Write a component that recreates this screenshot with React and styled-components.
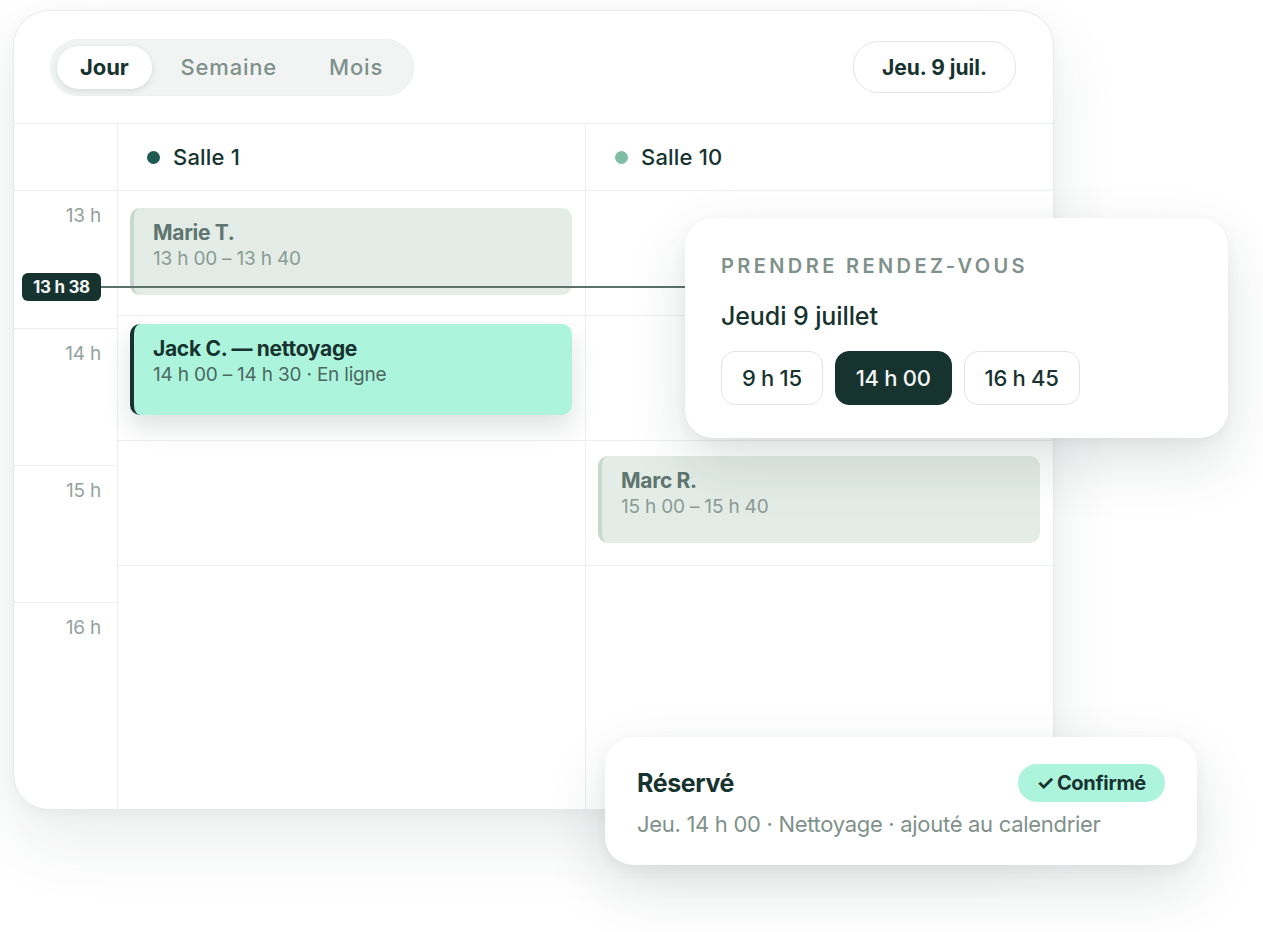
import { createGlobalStyle, styled } from "styled-components";

const GlobalStyle = createGlobalStyle`
    html, body {
        margin: 0;
        padding: 0;
        background: #ffffff;
    }

    body {
        font-family: Inter, "Noto Sans", sans-serif;
        color: #17332f;
        -webkit-font-smoothing: antialiased;
    }
`

const Page = styled.div`
    position: relative;
    width: 1263px;
    height: 932px;
    padding: 10px 0 0 13px;
    box-sizing: border-box;
    overflow: hidden;
`

const Calendar = styled.div`
    width: 1041px;
    height: 800px;
    box-sizing: border-box;
    border: 1px solid #e6ebe9;
    border-radius: 36px;
    background: #fff;
    overflow: hidden;
    display: flex;
    flex-direction: column;
    box-shadow: 0 30px 70px rgba(30, 60, 55, 0.09), 0 4px 16px rgba(30, 60, 55, 0.04);
`

const Toolbar = styled.div`
    height: 113px;
    flex-shrink: 0;
    display: flex;
    align-items: center;
    justify-content: space-between;
    padding: 0 37px 0 36px;
    box-sizing: border-box;
    border-bottom: 1px solid #eceff0;
`

const Segmented = styled.div`
    display: flex;
    align-items: center;
    gap: 6px;
    height: 57px;
    padding: 0 8px 0 7px;
    box-sizing: border-box;
    background: #f1f4f3;
    border-radius: 29px;
    box-shadow: inset 0 0 0 1px #eef1f0;
`

const Segment = styled.div`
    height: 43px;
    padding: 0 23px;
    display: flex;
    align-items: center;
    border-radius: 22px;
    font-size: 22px;
    letter-spacing: ${p => (p.$active ? "-0.1px" : "0.8px")};
    font-weight: ${p => (p.$active ? 700 : 500)};
    color: ${p => (p.$active ? "#17332f" : "#7f918b")};
    background: ${p => (p.$active ? "#fff" : "transparent")};
    box-shadow: ${p => (p.$active ? "0 2px 6px rgba(20, 50, 45, 0.12)" : "none")};
`

const DateButton = styled.div`
    height: 50px;
    padding: 0 28px;
    display: flex;
    align-items: center;
    border: 1px solid #e0e6e4;
    border-radius: 25px;
    font-size: 21px;
    font-weight: 700;
    letter-spacing: 0;
    color: #17332f;
`

const Grid = styled.div`
    flex: 1;
    display: grid;
    grid-template-columns: 104px 468px 1fr;
    grid-template-rows: 67px 1fr;
    position: relative;
`

const Corner = styled.div`
    border-bottom: 1px solid #eceff0;
    border-right: 1px solid #eceff0;
`

const RoomHead = styled.div`
    display: flex;
    align-items: center;
    gap: 13px;
    padding-left: 29px;
    border-bottom: 1px solid #eceff0;
    border-right: ${p => (p.$last ? "none" : "1px solid #eceff0")};
    font-size: 22px;
    font-weight: 500;
    letter-spacing: 0.2px;
    color: #17332f;
`

const Dot = styled.span`
    width: 13px;
    height: 13px;
    border-radius: 50%;
    background: ${p => p.$color};
`

const Hours = styled.div`
    display: flex;
    flex-direction: column;
    border-right: 1px solid #eceff0;
`

const HourRow = styled.div`
    height: 137px;
    flex-shrink: 0;
    box-sizing: border-box;
    border-top: ${p => (p.$first ? "none" : "1px solid #eceff0")};
    padding: 13px 16px 0 0;
    text-align: right;
    font-size: 19px;
    letter-spacing: -0.2px;
    color: #93a29d;
`

const Room = styled.div`
    display: flex;
    flex-direction: column;
    border-right: ${p => (p.$last ? "none" : "1px solid #eceff0")};
`

const Slot = styled.div`
    height: 125px;
    box-sizing: border-box;
    border-bottom: 1px solid #eceff0;
    padding: ${p => p.$offset}px 13px 0 12px;
`

const Event = styled.div`
    height: ${p => p.$height}px;
    box-sizing: border-box;
    border-radius: 10px;
    border-left: 4px solid ${p => (p.$active ? "#17332f" : "#c7d8ce")};
    background: ${p => (p.$active ? "#adf4dc" : "#e3ece6")};
    padding: 12px 19px;
    box-shadow: ${p => (p.$active ? "0 12px 26px rgba(20, 50, 45, 0.14)" : "none")};
    position: relative;
    z-index: ${p => (p.$active ? 2 : 0)};
`

const EventTitle = styled.div`
    font-size: 21px;
    font-weight: 700;
    letter-spacing: -0.3px;
    line-height: 26px;
    color: ${p => (p.$active ? "#17332f" : "#5f756f")};
`

const EventTime = styled.div`
    font-size: 19px;
    letter-spacing: -0.2px;
    line-height: 26px;
    color: ${p => (p.$active ? "#4c6862" : "#8b9b96")};
`

const NowLine = styled.div`
    position: absolute;
    left: 8px;
    right: 0;
    top: 162px;
    height: 2px;
    background: #5c716c;
    z-index: 3;
`

const NowBadge = styled.div`
    position: absolute;
    left: 0;
    top: -13px;
    height: 28px;
    padding: 0 11px;
    display: flex;
    align-items: center;
    border-radius: 6px;
    background: #17332f;
    color: #f2f5f4;
    font-size: 17px;
    font-weight: 700;
    letter-spacing: -0.3px;
`

const Booking = styled.div`
    position: absolute;
    left: 685px;
    top: 218px;
    width: 543px;
    height: 220px;
    box-sizing: border-box;
    padding: 36px 36px 0;
    background: #fff;
    border-radius: 28px;
    box-shadow: 0 24px 60px rgba(20, 50, 45, 0.13), 0 4px 14px rgba(20, 50, 45, 0.05);
    z-index: 5;
`

const Eyebrow = styled.div`
    font-size: 20px;
    font-weight: 600;
    letter-spacing: 3.4px;
    color: #7f918b;
    text-transform: uppercase;
    line-height: 24px;
`

const DayTitle = styled.div`
    margin-top: 24px;
    font-size: 25px;
    font-weight: 500;
    letter-spacing: -0.1px;
    line-height: 28px;
    color: #17332f;
`

const Slots = styled.div`
    display: flex;
    gap: 12px;
    margin-top: 21px;
`

const TimeChip = styled.div`
    height: 54px;
    padding: 0 20px;
    display: flex;
    align-items: center;
    box-sizing: border-box;
    border-radius: 14px;
    border: 1px solid ${p => (p.$selected ? "#17332f" : "#dfe5e3")};
    background: ${p => (p.$selected ? "#17332f" : "#fff")};
    color: ${p => (p.$selected ? "#f2f5f4" : "#17332f")};
    font-size: 22px;
    font-weight: 500;
    letter-spacing: -0.3px;
`

const Confirmation = styled.div`
    position: absolute;
    left: 605px;
    top: 737px;
    width: 592px;
    height: 128px;
    box-sizing: border-box;
    padding: 27px 32px 0;
    background: #fff;
    border-radius: 28px;
    box-shadow: 0 24px 60px rgba(20, 50, 45, 0.13), 0 4px 14px rgba(20, 50, 45, 0.05);
    z-index: 5;
`

const ConfirmRow = styled.div`
    display: flex;
    align-items: center;
    justify-content: space-between;
`

const ConfirmTitle = styled.div`
    font-size: 25px;
    font-weight: 700;
    letter-spacing: -0.4px;
    color: #17332f;
`

const Badge = styled.div`
    height: 38px;
    padding: 0 19px;
    display: flex;
    align-items: center;
    gap: 3px;
    border-radius: 19px;
    background: #adf4dc;
    font-size: 20px;
    font-weight: 700;
    letter-spacing: -0.3px;
    color: #17332f;
`

const ConfirmText = styled.div`
    margin-top: 9px;
    font-size: 22px;
    letter-spacing: -0.3px;
    color: #7f918b;
`

const rooms = [
    { name: "Salle 1", color: "#1f5a52" },
    { name: "Salle 10", color: "#7fbea5" },
]

const App = () => {

    return (

        <Page>

            <GlobalStyle />

            <Calendar>

                <Toolbar>
                    <Segmented>
                        <Segment $active>Jour</Segment>
                        <Segment>Semaine</Segment>
                        <Segment>Mois</Segment>
                    </Segmented>
                    <DateButton>Jeu. 9 juil.</DateButton>
                </Toolbar>

                <Grid>

                    <Corner />
                    {rooms.map((r, i) => (
                        <RoomHead key={r.name} $last={i === rooms.length - 1}>
                            <Dot $color={r.color} />
                            {r.name}
                        </RoomHead>
                    ))}

                    <Hours>
                        <HourRow $first>13 h</HourRow>
                        <HourRow>14 h</HourRow>
                        <HourRow>15 h</HourRow>
                        <HourRow>16 h</HourRow>
                    </Hours>

                    <Room>
                        <Slot $offset={17}>
                            <Event $height={87}>
                                <EventTitle>Marie T.</EventTitle>
                                <EventTime>13 h 00 – 13 h 40</EventTime>
                            </Event>
                        </Slot>
                        <Slot $offset={8}>
                            <Event $active $height={91}>
                                <EventTitle $active>Jack C. — nettoyage</EventTitle>
                                <EventTime $active>14 h 00 – 14 h 30 · En ligne</EventTime>
                            </Event>
                        </Slot>
                        <Slot $offset={0} />
                    </Room>

                    <Room $last>
                        <Slot $offset={0} />
                        <Slot $offset={0} />
                        <Slot $offset={15}>
                            <Event $height={87}>
                                <EventTitle>Marc R.</EventTitle>
                                <EventTime>15 h 00 – 15 h 40</EventTime>
                            </Event>
                        </Slot>
                    </Room>

                    <NowLine>
                        <NowBadge>13 h 38</NowBadge>
                    </NowLine>

                </Grid>

            </Calendar>

            <Booking>
                <Eyebrow>Prendre rendez-vous</Eyebrow>
                <DayTitle>Jeudi 9 juillet</DayTitle>
                <Slots>
                    <TimeChip>9 h 15</TimeChip>
                    <TimeChip $selected>14 h 00</TimeChip>
                    <TimeChip>16 h 45</TimeChip>
                </Slots>
            </Booking>

            <Confirmation>
                <ConfirmRow>
                    <ConfirmTitle>Réservé</ConfirmTitle>
                    <Badge><span>✓</span>Confirmé</Badge>
                </ConfirmRow>
                <ConfirmText>Jeu. 14 h 00 · Nettoyage · ajouté au calendrier</ConfirmText>
            </Confirmation>

        </Page>

    )

}

export default App
